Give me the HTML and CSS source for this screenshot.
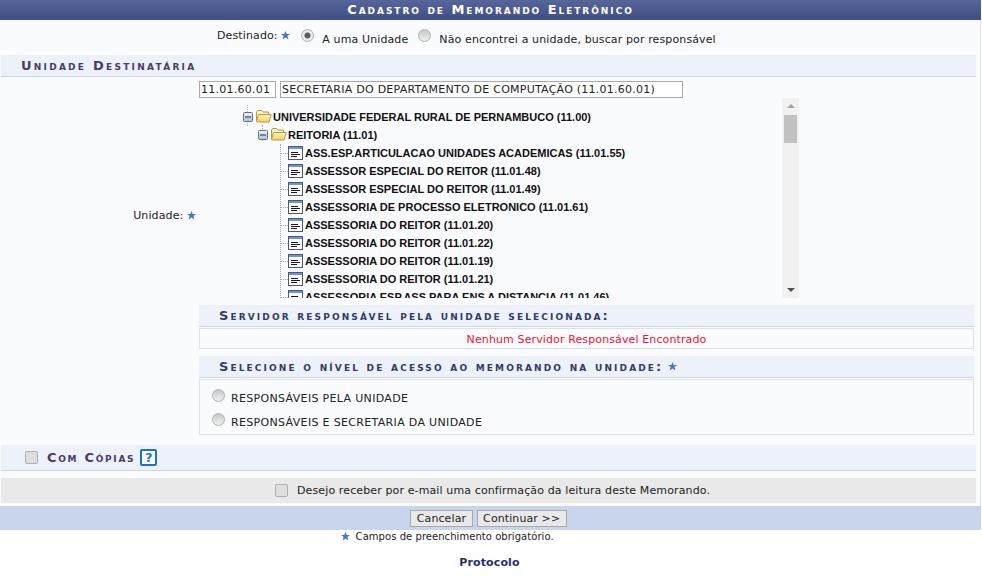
FILE: index.html
```html
<!DOCTYPE html>
<html lang="pt-BR">
<head>
<meta charset="utf-8">
<title>Cadastro de Memorando Eletrônico</title>
<link rel="stylesheet" href="styles.css">
</head>
<body>
<svg class="defs" width="0" height="0" aria-hidden="true">
  <defs>
    <linearGradient id="boxfill" x1="0" y1="0" x2="0" y2="1"><stop offset="0" stop-color="#f2f4f7"/><stop offset="1" stop-color="#b4becc"/></linearGradient>
    <linearGradient id="foldfill" x1="0" y1="0" x2="0" y2="1"><stop offset="0" stop-color="#fff6c4"/><stop offset="1" stop-color="#f5cf63"/></linearGradient>
    <symbol id="star" viewBox="0 0 9 9"><path d="M4.500 0 5.700 3H9L6.400 5.100 7.400 8.600 4.500 6.600 1.600 8.600 2.600 5.100 0 3H3.300Z" fill="#4a76c8"/></symbol>
    <symbol id="minus" viewBox="0 0 10 10"><rect x=".5" y=".5" width="9" height="9" rx="1" fill="url(#boxfill)" stroke="#5f7189"/><path d="M2 5H8" stroke="#1c2c48"/></symbol>
    <symbol id="folder" viewBox="0 0 17 13"><path d="M1.500 11.500V2L2.500 .5H6.500L8 2H13.500V4.500" fill="#fdf3bd" stroke="#b99a45"/><path d="M1.500 11.500 3.500 4.500H16.200L14 12H2Z" fill="url(#foldfill)" stroke="#b99a45"/></symbol>
    <symbol id="leaf" viewBox="0 0 15 14"><rect x=".5" y=".5" width="14" height="13" fill="#fff" stroke="#4a5a78"/><rect x="1" y="1" width="13" height="2" fill="#6b93e2"/><path d="M3 6.500H10M3 8.500H12M3 10.500H9" stroke="#15151f"/></symbol>
  </defs>
</svg>
<main class="form">
  <h1 class="title">Cadastro de Memorando Eletrônico</h1>
  <div class="dest">
    <span class="dest-label">Destinado: <svg class="star"><use href="#star"/></svg></span>
    <input class="radio" type="radio" name="dest" checked>
    <span class="opt">A uma Unidade</span>
    <input class="radio" type="radio" name="dest">
    <span class="opt">Não encontrei a unidade, buscar por responsável</span>
  </div>
  <h2 class="section">Unidade Destinatária</h2>
  <div class="grid">
    <div class="label">Unidade: <svg class="star"><use href="#star"/></svg></div>
    <div class="col">
      <div class="inputs">
        <input class="code" type="text" value="11.01.60.01">
        <input class="name" type="text" value="SECRETARIA DO DEPARTAMENTO DE COMPUTAÇÃO (11.01.60.01)">
      </div>
      <div class="tree-box">
        <div class="tree">
          <div class="node root"><span class="stub"></span><svg class="minus"><use href="#minus"/></svg><svg class="folder"><use href="#folder"/></svg>UNIVERSIDADE FEDERAL RURAL DE PERNAMBUCO (11.00)</div>
          <div class="node branch"><span class="stub"></span><svg class="minus"><use href="#minus"/></svg><svg class="folder"><use href="#folder"/></svg>REITORIA (11.01)</div>
          <div class="leaves">
            <div class="node leaf"><svg class="leaf-ico"><use href="#leaf"/></svg>ASS.ESP.ARTICULACAO UNIDADES ACADEMICAS (11.01.55)</div>
            <div class="node leaf"><svg class="leaf-ico"><use href="#leaf"/></svg>ASSESSOR ESPECIAL DO REITOR (11.01.48)</div>
            <div class="node leaf"><svg class="leaf-ico"><use href="#leaf"/></svg>ASSESSOR ESPECIAL DO REITOR (11.01.49)</div>
            <div class="node leaf"><svg class="leaf-ico"><use href="#leaf"/></svg>ASSESSORIA DE PROCESSO ELETRONICO (11.01.61)</div>
            <div class="node leaf"><svg class="leaf-ico"><use href="#leaf"/></svg>ASSESSORIA DO REITOR (11.01.20)</div>
            <div class="node leaf"><svg class="leaf-ico"><use href="#leaf"/></svg>ASSESSORIA DO REITOR (11.01.22)</div>
            <div class="node leaf"><svg class="leaf-ico"><use href="#leaf"/></svg>ASSESSORIA DO REITOR (11.01.19)</div>
            <div class="node leaf"><svg class="leaf-ico"><use href="#leaf"/></svg>ASSESSORIA DO REITOR (11.01.21)</div>
            <div class="node leaf"><svg class="leaf-ico"><use href="#leaf"/></svg>ASSESSORIA ESP.ASS PARA ENS A DISTANCIA (11.01.46)</div>
          </div>
        </div>
        <div class="scrollbar">
          <span class="arrow up"></span>
          <span class="thumb"></span>
          <span class="arrow down"></span>
        </div>
      </div>
      <h3 class="sub first">Servidor responsável pela unidade selecionada:</h3>
      <div class="panel error">Nenhum Servidor Responsável Encontrado</div>
    </div>
    <div class="col second">
      <h3 class="sub">Selecione o nível de acesso ao memorando na unidade: <svg class="star"><use href="#star"/></svg></h3>
      <div class="panel access">
        <label class="access-row"><input class="radio" type="radio" name="nivel"><span>RESPONSÁVEIS PELA UNIDADE</span></label>
        <label class="access-row"><input class="radio" type="radio" name="nivel"><span>RESPONSÁVEIS E SECRETARIA DA UNIDADE</span></label>
      </div>
    </div>
  </div>
  <h2 class="section copies"><input class="check" type="checkbox">Com Cópias<span class="help">?</span></h2>
  <div class="confirm"><input class="check" type="checkbox"><span>Desejo receber por e-mail uma confirmação da leitura deste Memorando.</span></div>
  <div class="actions">
    <button class="btn" type="button">Cancelar</button>
    <button class="btn" type="button">Continuar &gt;&gt;</button>
  </div>
</main>
<p class="required"><svg class="star"><use href="#star"/></svg> Campos de preenchimento obrigatório.</p>
<p class="footer-link"><a href="#">Protocolo</a></p>
</body>
</html>
```

FILE: styles.css
```css
* { box-sizing: border-box; }
html, body { margin: 0; padding: 0; }
body {
  width: 982px;
  height: 576px;
  overflow: hidden;
  background: #fff;
  color: #222;
  font-family: "DejaVu Sans", Verdana, sans-serif;
  font-size: 11px;
  letter-spacing: .12px;
}
.defs { position: absolute; }
.star { width: 9px; height: 9px; vertical-align: -0.5px; }

.form {
  width: 981px;
  height: 530px;
  background: #fafbfe;
  border-right: 1px solid #e2e3e8;
  display: flex;
  flex-direction: column;
}
.title {
  margin: 0 -1px 0 0;
  height: 20px;
  background: linear-gradient(#56659a, #414e84);
  color: #fff;
  font: bold 13px/20px "DejaVu Sans", Verdana, sans-serif;
  font-variant: small-caps;
  letter-spacing: 1.95px;
  text-align: center;
}

.dest {
  height: 35px;
  display: flex;
  align-items: flex-start;
  padding: 9px 0 0 217px;
}
.dest-label { margin-right: 11px; line-height: 14px; }
.opt { margin: 4px 10px 0 8px; line-height: 14px; }

.radio, .check {
  appearance: none;
  -webkit-appearance: none;
  margin: 0;
  flex: none;
  background: linear-gradient(#c8c8c8, #f1f1f1);
  border: 1px solid #b0b0b0;
}
.radio { width: 13px; height: 13px; border-radius: 50%; }
.radio:checked {
  background: radial-gradient(circle, #5a5a5a 0 2.5px, #ececec 3.5px);
}
.check { width: 13px; height: 13px; border-radius: 2px; background: #dedede; }

.section {
  margin: 0 4px 0 1px;
  height: 22px;
  padding-left: 20px;
  background: #edf2fa;
  border-bottom: 1px solid #c8d6ee;
  color: #4a3a6e;
  font: bold 13px/21px "DejaVu Sans", Verdana, sans-serif;
  font-variant: small-caps;
  letter-spacing: 2.25px;
}

.grid {
  display: grid;
  grid-template-columns: 199px 775px;
  height: 368px;
  align-content: start;
}
.label {
  text-align: right;
  align-self: center;
  padding: 6px 3px 0 0;
}
.col { grid-column: 2; }
.label + .col { grid-row: 1; }

.inputs { display: flex; gap: 4px; padding-top: 4px; height: 21px; }
.inputs input {
  height: 17px;
  padding: 0 1px;
  border: 1px solid #a9a9a9;
  background: #fff;
  color: #222;
  font: 11px "DejaVu Sans", Verdana, sans-serif;
  letter-spacing: .25px;
  outline: none;
}
.code { width: 77px; }
.name { width: 403px; }

.tree-box {
  display: flex;
  width: 600px;
  height: 200px;
}
.tree {
  flex: 1;
  overflow: hidden;
  padding: 10px 0 0 44px;
  color: #111;
  letter-spacing: 0;
  font: bold 11px/18px "Liberation Sans", Arial, sans-serif;
}
.node { height: 18px; display: flex; align-items: center; white-space: nowrap; position: relative; }
.minus { width: 10px; height: 10px; flex: none; margin-right: 2px; }
.folder { width: 17px; height: 13px; flex: none; margin-right: 1px; }
.stub {
  position: absolute;
  top: -3px;
  height: 21px;
  border-left: 1px dotted #b5b5b5;
  left: 4px;
  z-index: 0;
}
.branch { padding-left: 15px; }
.branch .stub { left: 19px; height: 16px; top: -1px; }
.node svg { position: relative; z-index: 1; }
.leaves { margin-left: 37px; border-left: 1px dotted #aaa; }
.leaf { padding-left: 7px; }
.leaf::before {
  content: "";
  position: absolute;
  left: 0;
  top: 9px;
  width: 7px;
  border-top: 1px dotted #aaa;
}
.leaf-ico { width: 15px; height: 14px; flex: none; margin-right: 2px; }

.scrollbar {
  width: 17px;
  flex: none;
  background: #f1f1f1;
  display: flex;
  flex-direction: column;
  align-items: center;
  padding: 6px 0;
}
.arrow { width: 0; height: 0; border: 4px solid transparent; flex: none; }
.up { border-top: 0; border-bottom: 4px solid #a3a3a3; }
.down { border-bottom: 0; border-top: 4px solid #505050; margin-top: auto; }
.thumb { width: 13px; height: 28px; background: #c1c1c1; margin-top: 7px; }

.sub {
  margin: 7px 0 0;
  height: 22px;
  padding-left: 20px;
  background: #edf2fa;
  border-bottom: 1px solid #cdd6e6;
  color: #333a6c;
  font: bold 13px/21px "DejaVu Sans", Verdana, sans-serif;
  font-variant: small-caps;
  letter-spacing: 2.11px;
}
.sub .star { margin-left: -2px; }
.panel {
  margin-top: 1px;
  border: 1px solid #dfe1e6;
}
.error {
  height: 21px;
  line-height: 21px;
  text-align: center;
  color: #f8102c;
}
.access { height: 56px; padding: 6px 0 0 12px; letter-spacing: .33px; }
.access-row { display: flex; align-items: flex-start; height: 24px; }
.access-row .radio { margin-top: 3px; }
.access-row span { margin: 6px 0 0 6px; line-height: 14px; }

.copies { height: 26px; margin-top: 2px; display: flex; align-items: center; padding-left: 24px; line-height: 24px; letter-spacing: 1.7px; }
.copies .check { margin-right: 9px; }
.help {
  width: 17px; height: 17px;
  margin-left: 5px;
  border: 2px solid #1c74c8;
  border-radius: 2px;
  background: #fff;
  color: #1c74c8;
  letter-spacing: 0;
  font: bold 13px/13px "DejaVu Sans", Verdana, sans-serif;
  text-align: center;
}

.confirm {
  margin: 7px 4px 0 1px;
  height: 25px;
  background: #e9e9e9;
  display: flex;
  align-items: center;
  padding-left: 274px;
}
.confirm span { margin-left: 9px; }

.actions {
  margin: 3px -1px 0 0;
  height: 24px;
  background: #c9d5eb;
  display: flex;
  justify-content: center;
  align-items: center;
  gap: 4px;
  padding-right: 4px;
}
.btn {
  height: 17px;
  padding: 0 5.500px;
  border: 1px solid #a9a9a9;
  background: #e9e9e9;
  color: #222;
  letter-spacing: .1px;
  font: 11px "DejaVu Sans", Verdana, sans-serif;
}

.required {
  margin: 0;
  text-align: center;
  font-size: 10px;
  line-height: 14px;
  color: #222;
  letter-spacing: .05px;
  padding-right: 87px;
}
.required .star { margin-right: 2px; }
.footer-link {
  margin: 12px 0 0;
  text-align: center;
  padding-right: 3px;
  font: bold 11px/14px "DejaVu Sans", Verdana, sans-serif;
}
.footer-link a { color: #1f2f78; text-decoration: none; }
```
